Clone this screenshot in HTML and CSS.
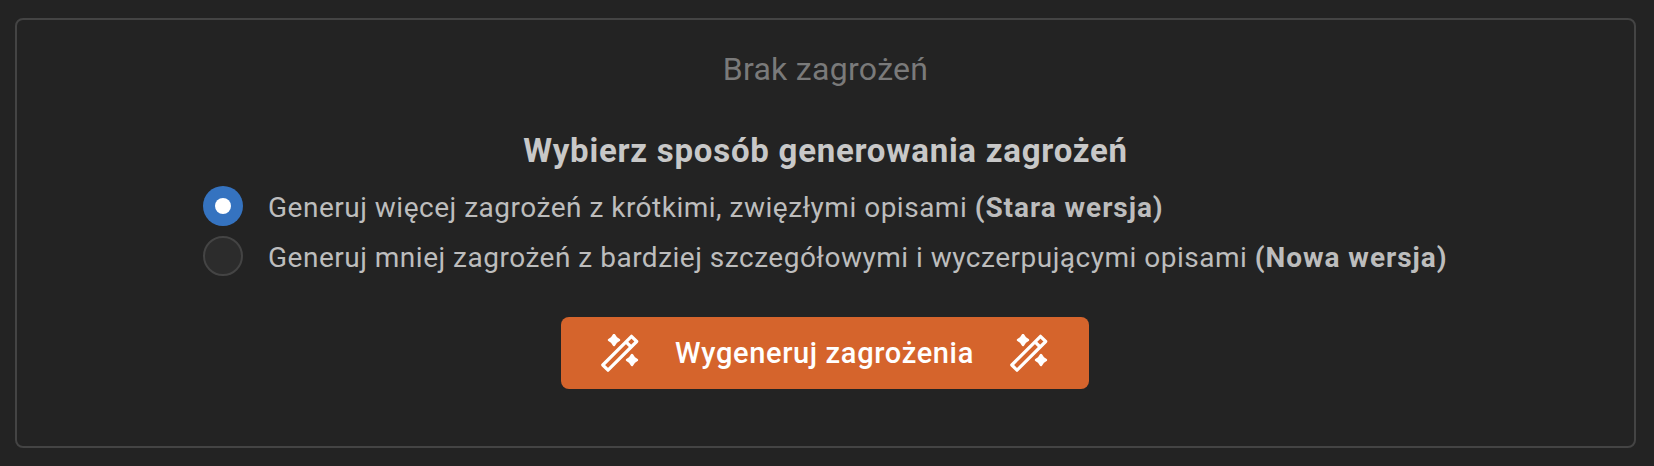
FILE: index.html
```html
<!DOCTYPE html>
<html lang="pl">
<head>
    <meta charset="UTF-8">
    <title>Brak zagrożeń</title>
    <link rel="stylesheet" href="styles.css">
</head>
<body>

<div class="panel">
    <h3 class="empty-title">Brak zagrożeń</h3>
    <h4 class="mode-title">Wybierz sposób generowania zagrożeń</h4>

    <div class="mode-list">
        <label class="mode-row">
            <span class="radio radio-on"></span>
            <span class="mode-text">Generuj więcej zagrożeń z krótkimi, zwięzłymi opisami <b>(Stara wersja)</b></span>
        </label>
        <label class="mode-row">
            <span class="radio"></span>
            <span class="mode-text">Generuj mniej zagrożeń z bardziej szczegółowymi i wyczerpującymi opisami <b>(Nowa wersja)</b></span>
        </label>
    </div>

    <button class="generate-button">
        <svg class="wand" viewBox="0 0 38 38"><use href="#wand-icon"></use></svg>
        <span>Wygeneruj zagrożenia</span>
        <svg class="wand" viewBox="0 0 38 38"><use href="#wand-icon"></use></svg>
    </button>
</div>

<svg class="icon-defs" width="0" height="0">
    <symbol id="wand-icon" viewBox="0 0 38 38">
        <path d="M1.800 31 L30.500 2.300 L35.700 7.500 L7 36.200 Z" fill="none" stroke="#fff" stroke-width="3.200" stroke-linejoin="round"/>
        <path d="M25 7.800 L30.200 13" fill="none" stroke="#fff" stroke-width="3.200"/>
        <path d="M13 1 L15 4 L18 6 L15 8 L13 11 L11 8 L8 6 L11 4 Z" fill="#fff" stroke="#fff" stroke-width="2.400" stroke-linejoin="round"/>
        <path d="M31 21 L33 24 L36 26 L33 28 L31 31 L29 28 L26 26 L29 24 Z" fill="#fff" stroke="#fff" stroke-width="2.400" stroke-linejoin="round"/>
    </symbol>
</svg>

</body>
</html>
```

FILE: styles.css
```css
* {
    box-sizing: border-box;
}
body {
    margin: 0;
    height: 466px;
    padding: 18px 18px 18px 15px;
    background-color: #232323;
    font-family: Roboto, "Liberation Sans", sans-serif;
    overflow: hidden;
}
.panel {
    height: 430px;
    border: 2px solid #444;
    border-radius: 8px;
    display: flex;
    flex-direction: column;
    align-items: center;
}
.empty-title {
    margin: 30px 0 0;
    font-size: 32px;
    line-height: 38px;
    font-weight: 400;
    letter-spacing: 0.3px;
    color: #7a7a7a;
}
.mode-title {
    margin: 45px 0 0;
    font-size: 33px;
    line-height: 36px;
    font-weight: 700;
    letter-spacing: 0.75px;
    color: #c8c8c8;
}
.mode-list {
    align-self: flex-start;
    margin: 17px 0 0 186px;
    display: flex;
    flex-direction: column;
    gap: 10px;
}
.mode-row {
    display: flex;
    align-items: center;
    gap: 25px;
    font-size: 28px;
    letter-spacing: 0.5px;
    color: #bdbdbd;
}
.mode-text {
    padding-top: 4px;
    line-height: 36px;
}
.mode-row b {
    font-weight: 700;
    letter-spacing: 0.95px;
}
.radio {
    width: 40px;
    height: 40px;
    border-radius: 50%;
    border: 2px solid #444;
    background-color: #2c2c2c;
    display: flex;
    align-items: center;
    justify-content: center;
}
.radio-on {
    border: none;
    background-color: #3573c0;
}
.radio-on::after {
    content: "";
    width: 16px;
    height: 16px;
    border-radius: 50%;
    background-color: #fff;
}
.generate-button {
    margin-top: 41px;
    margin-left: -2px;
    width: 528px;
    height: 72px;
    border: none;
    border-radius: 8px;
    background-color: #d5642c;
    color: #fff;
    font-family: inherit;
    font-size: 29px;
    font-weight: 500;
    letter-spacing: 0.65px;
    display: flex;
    align-items: center;
    justify-content: center;
    gap: 36px;
    cursor: pointer;
}
.wand {
    width: 38px;
    height: 38px;
}
.icon-defs {
    position: absolute;
}
```
